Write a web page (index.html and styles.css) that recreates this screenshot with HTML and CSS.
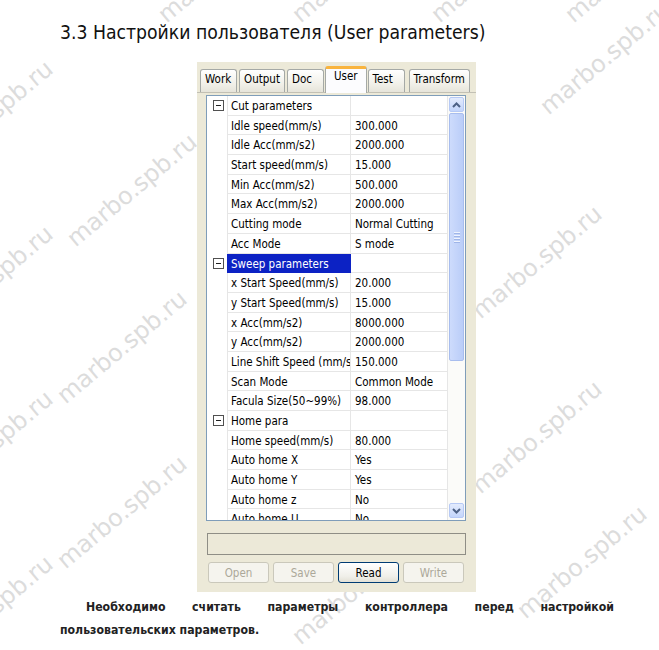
FILE: index.html
```html
<!DOCTYPE html>
<html lang="ru">
<head>
  <meta charset="UTF-8" />
  <title>User parameters</title>
  <link rel="stylesheet" href="styles.css">
</head>
<body>
  <div class="watermark" id="wm" aria-hidden="true"></div>

  <div class="page">
    <h1>3.3 Настройки пользователя (User parameters)</h1>

    <div class="dialog">
      <div class="tabs">
        <span class="tab">Work</span>
        <span class="tab">Output</span>
        <span class="tab">Doc</span>
        <span class="tab active">User</span>
        <span class="tab">Test</span>
        <span class="tab">Transform</span>
      </div>

      <div class="tab-page">
        <div class="list">
          <div class="rows" id="rows"></div>
          <div class="scrollbar">
            <div class="sb-btn"><svg width="9" height="6" viewBox="0 0 9 6"><path d="M1 5 L4.5 1.5 L8 5" fill="none" stroke="#4d6185" stroke-width="2"/></svg></div>
            <div class="sb-track">
              <div class="sb-thumb"><span></span><span></span><span></span><span></span></div>
            </div>
            <div class="sb-btn down"><svg width="9" height="6" viewBox="0 0 9 6"><path d="M1 1 L4.5 4.5 L8 1" fill="none" stroke="#4d6185" stroke-width="2"/></svg></div>
          </div>
        </div>

        <div class="status"></div>

        <div class="buttons">
          <button disabled>Open</button>
          <button disabled>Save</button>
          <button class="default">Read</button>
          <button disabled>Write</button>
        </div>
      </div>
    </div>

    <p class="note">Необходимо считать параметры контроллера перед настройкой пользовательских параметров.</p>
  </div>

  <script>
    const params = [
      { group: "Cut parameters" },
      { name: "Idle speed(mm/s)", value: "300.000" },
      { name: "Idle Acc(mm/s2)", value: "2000.000" },
      { name: "Start speed(mm/s)", value: "15.000" },
      { name: "Min Acc(mm/s2)", value: "500.000" },
      { name: "Max Acc(mm/s2)", value: "2000.000" },
      { name: "Cutting mode", value: "Normal Cutting" },
      { name: "Acc Mode", value: "S mode" },
      { group: "Sweep parameters", selected: true },
      { name: "x Start Speed(mm/s)", value: "20.000" },
      { name: "y Start Speed(mm/s)", value: "15.000" },
      { name: "x Acc(mm/s2)", value: "8000.000" },
      { name: "y Acc(mm/s2)", value: "2000.000" },
      { name: "Line Shift Speed (mm/s)", value: "150.000" },
      { name: "Scan Mode", value: "Common Mode" },
      { name: "Facula Size(50~99%)", value: "98.000" },
      { group: "Home para" },
      { name: "Home speed(mm/s)", value: "80.000" },
      { name: "Auto home X", value: "Yes" },
      { name: "Auto home Y", value: "Yes" },
      { name: "Auto home z", value: "No" },
      { name: "Auto home U", value: "No" }
    ];

    const rows = document.getElementById("rows");
    params.forEach(p => {
      const row = document.createElement("div");
      row.className = "row";
      if (p.group) {
        row.innerHTML = `
          <span class="expander"><i></i></span>
          <span class="cell name${p.selected ? " selected" : ""}">${p.group}</span>
          <span class="cell value"></span>`;
      } else {
        row.innerHTML = `
          <span class="expander"></span>
          <span class="cell name">${p.name}</span>
          <span class="cell value">${p.value}</span>`;
      }
      rows.appendChild(row);
    });

    // watermark stamps (centre points on the page)
    const stamps = [
      [-12, 117], [-12, 282], [-12, 447], [-12, 612],
      [132, 190], [122, 347], [122, 512],
      [223, -34], [357, -34], [496, -34], [630, -34],
      [605, 58], [537, 262], [537, 437], [582, 562], [357, 588]
    ];
    const wm = document.getElementById("wm");
    stamps.forEach(([x, y]) => {
      const s = document.createElement("span");
      s.textContent = "marbo.spb.ru";
      s.style.left = x + "px";
      s.style.top = y + "px";
      wm.appendChild(s);
    });
  </script>
</body>
</html>
```

FILE: styles.css
```css
body { margin: 0; background: #fff; height: 650px; overflow: hidden; position: relative; }

.watermark { position: absolute; inset: 0; overflow: hidden; z-index: 0; }
.watermark span { position: absolute; transform: translate(-50%, -50%) rotate(-40deg); font: 24px "DejaVu Sans", sans-serif; color: #dcdcdc; white-space: nowrap; }

.page { position: relative; z-index: 1; padding: 21px 45px 0 60px; }

h1 { margin: 0 0 17px; font: 19.2px/24px "DejaVu Sans Condensed", "DejaVu Sans", sans-serif; font-stretch: condensed; color: #111; }

.dialog { width: 279px; height: 530px; margin-left: 137px; background: #ece9d8; box-sizing: border-box; padding-top: 4px; font: 11.5px "DejaVu Sans Condensed", "DejaVu Sans", sans-serif; font-stretch: condensed; color: #000; }

.tabs { display: flex; align-items: flex-end; height: 26px; padding-left: 3px; gap: 2px; }
.tab { min-width: 37px; height: 23px; line-height: 18px; padding: 0 4px; border: 1px solid #a5a9a6; border-bottom: none; border-radius: 3px 3px 0 0; background: linear-gradient(#fff, #f2f1ea 60%, #e6e4da); box-sizing: border-box; }
.tab.active { height: 27px; line-height: 14px; padding: 0 8px; margin: 0 -1px; background: #fcfcfe; border-top: 3px solid #f9b43d; position: relative; top: 1px; }
.tab:last-child { margin-left: 2px; }

.tab-page { border-top: 1px solid #c2c0b4; padding: 2px 10px 0 9px; }

.list { display: flex; height: 424px; border: 1px solid #7f9db9; background: #fff; overflow: hidden; }
.rows { width: 241px; }
.row { display: grid; grid-template-columns: 20px 124px 97px; height: 19.7px; }
.expander { display: flex; align-items: center; justify-content: center; padding-left: 2px; }
.expander i { width: 9px; height: 9px; border: 1px solid #505050; position: relative; }
.expander i::after { content: ""; position: absolute; left: 2px; right: 2px; top: 4px; height: 1px; background: #202020; }
.cell { border-right: 1px solid #e6e6e6; border-bottom: 1px solid #e6e6e6; padding: 1px 0 0 3px; line-height: 19px; white-space: nowrap; overflow: hidden; }
.cell.name { border-left: 1px solid #e6e6e6; }
.cell.value { padding-left: 4px; }
.cell.selected { background: #0c22c4; color: #fff; border-color: #0c22c4; }

.scrollbar { width: 17px; display: flex; flex-direction: column; background: #fbfbf9; padding: 1px 1px 0 1px; box-sizing: border-box; }
.sb-btn { height: 15px; border: 1px solid #b6c9f5; border-radius: 2px; background: linear-gradient(#e3ebfd, #c3d5fb); display: flex; align-items: center; justify-content: center; box-sizing: border-box; }
.sb-btn.down { margin-bottom: 2px; }
.sb-track { flex: 1; padding: 1px 0; }
.sb-thumb { height: 248px; border: 1px solid #a8bdee; border-radius: 2px; background: linear-gradient(90deg, #cddbfc, #bacdf8); box-sizing: border-box; display: flex; flex-direction: column; align-items: center; justify-content: center; gap: 1px; }
.sb-thumb span { width: 6px; height: 1px; background: #eef3fe; border-bottom: 1px solid #9fb5e8; }

.status { height: 22px; margin: 12px 0 0 1px; width: 259px; border: 1px solid #8f8e86; box-sizing: border-box; }

.buttons { display: grid; grid-template-columns: repeat(4, 61px); gap: 4px; margin: 7px 0 0 2px; }
.buttons button { height: 21px; font: inherit; padding: 0; border: 1px solid #cac8bb; border-radius: 3px; background: #f5f4ee; color: #aca899; }
.buttons button.default { border-color: #003c74; background: linear-gradient(#fff, #f0efe9 70%, #e3e1d6); color: #000; }

.note { margin: 4px 0 0; font: bold 12.2px/23px "DejaVu Sans Condensed", "DejaVu Sans", sans-serif; font-stretch: condensed; color: #222; text-align: justify; text-indent: 26px; }
```
